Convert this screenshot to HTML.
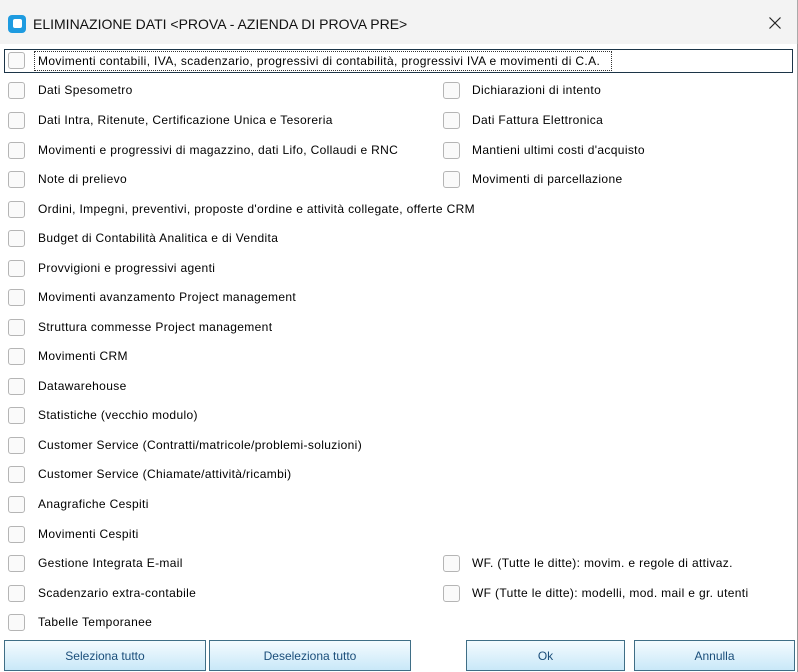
<!DOCTYPE html>
<html><head><meta charset="utf-8"><style>
*{margin:0;padding:0;box-sizing:border-box}
body{width:798px;height:672px;background:#fff;font-family:"Liberation Sans","DejaVu Sans",sans-serif;position:relative;overflow:hidden;color:#000}
.tb{position:absolute;left:0;top:0;width:798px;height:44px;background:#f3f3f3;border-right:1px solid #aaa}
.logo{position:absolute;left:8px;top:15px;width:18px;height:18px;border-radius:4px;background:#1e9be0}
.logo:after{content:"";position:absolute;left:5px;top:4px;width:9px;height:9px;background:#fff;border-radius:2px}
.tt{position:absolute;left:33px;top:16px;font-size:14px;color:#111}
.x{position:absolute;left:769px;top:17px}
.body{position:absolute;left:0;top:44px;width:798px;height:628px;border-right:1px solid #999}
.cb{position:absolute;width:17px;height:17px;border:1px solid #b5b5b5;border-radius:3px;background:#fafafa}
.l{position:absolute;font-size:12px;white-space:nowrap;letter-spacing:0.35px}
.focus{position:absolute;left:4px;top:49px;width:789px;height:24px;border:1px solid #1c3548}
.dot{position:absolute;left:34px;top:51px;width:578px;height:20px;border:1px dotted #333}
.btn{position:absolute;top:640px;height:31px;border:1px solid #3f6e86;background:linear-gradient(#f4fbff,#c9e8f8);color:#1b4e7a;font-size:12px;text-align:center;line-height:31px}
</style></head><body>
<div class="tb"><div class="logo"></div><div class="tt">ELIMINAZIONE DATI &lt;PROVA - AZIENDA DI PROVA PRE&gt;</div><svg class="x" width="12" height="12" viewBox="0 0 12 12"><path d="M0.5 0.5L11.5 11.5M11.5 0.5L0.5 11.5" stroke="#222" stroke-width="1.2"/></svg></div>
<div class="body"></div>
<div class="focus"></div><div class="dot"></div>
<div class="cb" style="left:8px;top:52px"></div><div class="l" style="left:38px;top:54px">Movimenti contabili, IVA, scadenzario, progressivi di contabilità, progressivi IVA e movimenti di C.A.</div>

<div class="cb" style="left:8px;top:82px"></div><div class="l" style="left:38px;top:83px">Dati Spesometro</div>
<div class="cb" style="left:443px;top:82px"></div><div class="l" style="left:472px;top:83px">Dichiarazioni di intento</div>
<div class="cb" style="left:8px;top:112px"></div><div class="l" style="left:38px;top:113px">Dati Intra, Ritenute, Certificazione Unica e Tesoreria</div>
<div class="cb" style="left:443px;top:112px"></div><div class="l" style="left:472px;top:113px">Dati Fattura Elettronica</div>
<div class="cb" style="left:8px;top:142px"></div><div class="l" style="left:38px;top:143px">Movimenti e progressivi di magazzino, dati Lifo, Collaudi e RNC</div>
<div class="cb" style="left:443px;top:142px"></div><div class="l" style="left:472px;top:143px">Mantieni ultimi costi d'acquisto</div>
<div class="cb" style="left:8px;top:171px"></div><div class="l" style="left:38px;top:172px">Note di prelievo</div>
<div class="cb" style="left:443px;top:171px"></div><div class="l" style="left:472px;top:172px">Movimenti di parcellazione</div>
<div class="cb" style="left:8px;top:201px"></div><div class="l" style="left:38px;top:202px">Ordini, Impegni, preventivi, proposte d'ordine e attività collegate, offerte CRM</div>
<div class="cb" style="left:8px;top:230px"></div><div class="l" style="left:38px;top:231px">Budget di Contabilità Analitica e di Vendita</div>
<div class="cb" style="left:8px;top:260px"></div><div class="l" style="left:38px;top:261px">Provvigioni e progressivi agenti</div>
<div class="cb" style="left:8px;top:289px"></div><div class="l" style="left:38px;top:290px">Movimenti avanzamento Project management</div>
<div class="cb" style="left:8px;top:319px"></div><div class="l" style="left:38px;top:320px">Struttura commesse Project management</div>
<div class="cb" style="left:8px;top:348px"></div><div class="l" style="left:38px;top:349px">Movimenti CRM</div>
<div class="cb" style="left:8px;top:378px"></div><div class="l" style="left:38px;top:379px">Datawarehouse</div>
<div class="cb" style="left:8px;top:407px"></div><div class="l" style="left:38px;top:408px">Statistiche (vecchio modulo)</div>
<div class="cb" style="left:8px;top:437px"></div><div class="l" style="left:38px;top:438px">Customer Service (Contratti/matricole/problemi-soluzioni)</div>
<div class="cb" style="left:8px;top:466px"></div><div class="l" style="left:38px;top:467px">Customer Service (Chiamate/attività/ricambi)</div>
<div class="cb" style="left:8px;top:496px"></div><div class="l" style="left:38px;top:497px">Anagrafiche Cespiti</div>
<div class="cb" style="left:8px;top:526px"></div><div class="l" style="left:38px;top:527px">Movimenti Cespiti</div>
<div class="cb" style="left:8px;top:555px"></div><div class="l" style="left:38px;top:556px">Gestione Integrata E-mail</div>
<div class="cb" style="left:443px;top:555px"></div><div class="l" style="left:472px;top:556px">WF. (Tutte le ditte): movim. e regole di attivaz.</div>
<div class="cb" style="left:8px;top:585px"></div><div class="l" style="left:38px;top:586px">Scadenzario extra-contabile</div>
<div class="cb" style="left:443px;top:585px"></div><div class="l" style="left:472px;top:586px">WF (Tutte le ditte): modelli, mod. mail e gr. utenti</div>
<div class="cb" style="left:8px;top:614px"></div><div class="l" style="left:38px;top:615px">Tabelle Temporanee</div>

<div class="btn" style="left:4px;width:202px">Seleziona tutto</div>
<div class="btn" style="left:209px;width:202px">Deseleziona tutto</div>
<div class="btn" style="left:466px;width:159px">Ok</div>
<div class="btn" style="left:634px;width:161px">Annulla</div>
</body></html>
